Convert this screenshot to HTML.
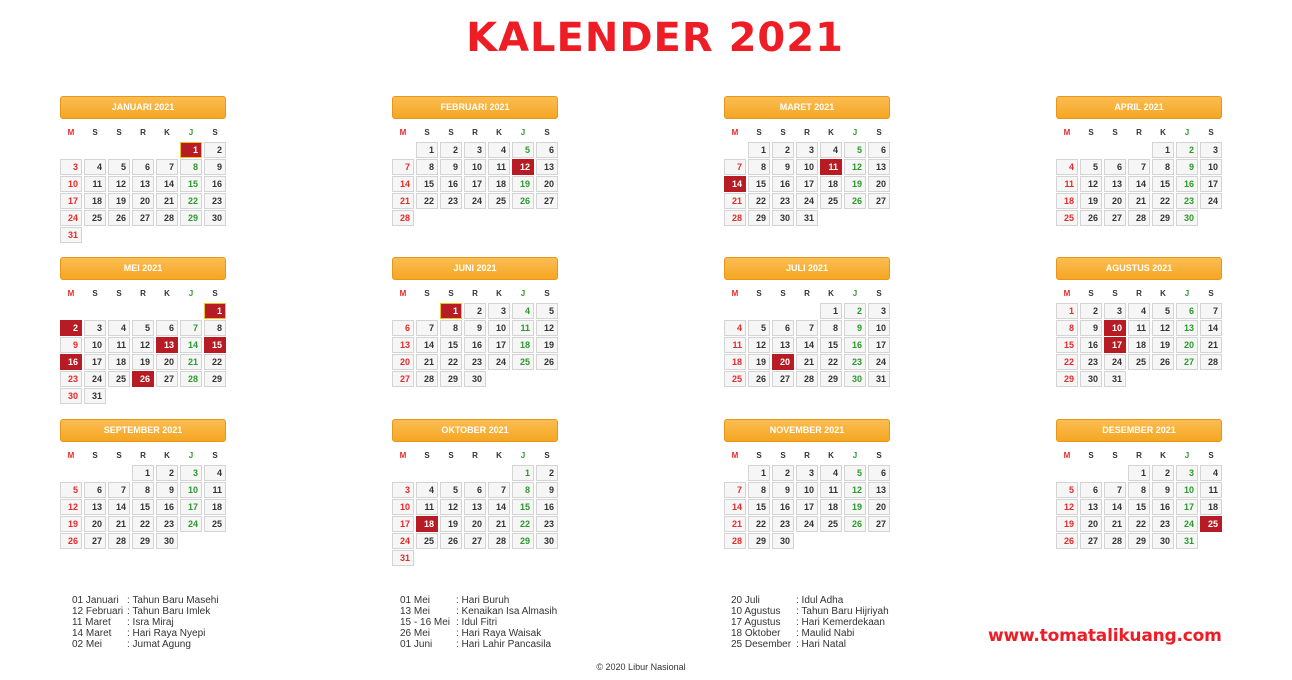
<!DOCTYPE html>
<html><head><meta charset="utf-8"><style>
*{margin:0;padding:0;box-sizing:border-box}
body{width:1292px;height:680px;background:#fff;position:relative;overflow:hidden;font-family:"Liberation Sans",Arial,sans-serif}
.title{position:absolute;left:0;width:1310px;top:14px;text-align:center;font-family:"DejaVu Sans",sans-serif;font-weight:bold;font-size:40px;color:#ee1c25;letter-spacing:1px;line-height:48px}
.m{position:absolute;width:168px}
.hd{height:23px;margin-left:0;width:166px;border:1px solid #e8961a;border-radius:3px;background:linear-gradient(#fbbd52,#f5a623);color:#fff;font-weight:bold;font-size:9px;text-align:center;line-height:21px}
.dn{display:grid;grid-template-columns:repeat(7,22px);column-gap:2px;margin-top:8px;height:12px;font-size:8px;font-weight:bold;color:#333;text-align:center;line-height:12px}
.dn span:first-child{color:#e52a2a}.dn span:nth-child(6){color:#2a9a2a}
.g{display:grid;grid-template-columns:repeat(7,22px);grid-auto-rows:16px;column-gap:2px;row-gap:1px;margin-top:3px}
.g span{border:1px solid #d4d4d4;background:#f6f6f6;font-size:9px;font-weight:bold;color:#333;text-align:right;padding-right:3px;line-height:14px}
.g span:nth-child(7n+1){color:#e52a2a}
.g span:nth-child(7n+6){color:#2a9a2a}
.g span.e{visibility:hidden}
.g span.h{background:#b71c25;color:#fff;border-color:#b71c25}
.g span.o{border-color:#f0c020}
.lg{position:absolute;font-size:10px;line-height:11px;color:#333}
.lg div{white-space:nowrap}
.lg b{font-weight:normal;display:inline-block}
.web{position:absolute;left:988px;top:626px;font-family:"DejaVu Sans",sans-serif;font-weight:bold;font-size:17px;color:#ee1c25;letter-spacing:-0.2px}
.ft{position:absolute;left:0;width:1282px;top:662px;text-align:center;font-size:9px;color:#333}
</style></head><body>
<div class="title">KALENDER 2021</div>

<div class="m" style="left:60px;top:96px"><div class="hd">JANUARI 2021</div><div class="dn"><span>M</span><span>S</span><span>S</span><span>R</span><span>K</span><span>J</span><span>S</span></div><div class="g"><span class="e"></span><span class="e"></span><span class="e"></span><span class="e"></span><span class="e"></span><span class="h o">1</span><span>2</span><span>3</span><span>4</span><span>5</span><span>6</span><span>7</span><span>8</span><span>9</span><span>10</span><span>11</span><span>12</span><span>13</span><span>14</span><span>15</span><span>16</span><span>17</span><span>18</span><span>19</span><span>20</span><span>21</span><span>22</span><span>23</span><span>24</span><span>25</span><span>26</span><span>27</span><span>28</span><span>29</span><span>30</span><span>31</span></div></div>

<div class="m" style="left:392px;top:96px"><div class="hd">FEBRUARI 2021</div><div class="dn"><span>M</span><span>S</span><span>S</span><span>R</span><span>K</span><span>J</span><span>S</span></div><div class="g"><span class="e"></span><span>1</span><span>2</span><span>3</span><span>4</span><span>5</span><span>6</span><span>7</span><span>8</span><span>9</span><span>10</span><span>11</span><span class="h">12</span><span>13</span><span>14</span><span>15</span><span>16</span><span>17</span><span>18</span><span>19</span><span>20</span><span>21</span><span>22</span><span>23</span><span>24</span><span>25</span><span>26</span><span>27</span><span>28</span></div></div>

<div class="m" style="left:724px;top:96px"><div class="hd">MARET 2021</div><div class="dn"><span>M</span><span>S</span><span>S</span><span>R</span><span>K</span><span>J</span><span>S</span></div><div class="g"><span class="e"></span><span>1</span><span>2</span><span>3</span><span>4</span><span>5</span><span>6</span><span>7</span><span>8</span><span>9</span><span>10</span><span class="h">11</span><span>12</span><span>13</span><span class="h">14</span><span>15</span><span>16</span><span>17</span><span>18</span><span>19</span><span>20</span><span>21</span><span>22</span><span>23</span><span>24</span><span>25</span><span>26</span><span>27</span><span>28</span><span>29</span><span>30</span><span>31</span></div></div>

<div class="m" style="left:1056px;top:96px"><div class="hd">APRIL 2021</div><div class="dn"><span>M</span><span>S</span><span>S</span><span>R</span><span>K</span><span>J</span><span>S</span></div><div class="g"><span class="e"></span><span class="e"></span><span class="e"></span><span class="e"></span><span>1</span><span>2</span><span>3</span><span>4</span><span>5</span><span>6</span><span>7</span><span>8</span><span>9</span><span>10</span><span>11</span><span>12</span><span>13</span><span>14</span><span>15</span><span>16</span><span>17</span><span>18</span><span>19</span><span>20</span><span>21</span><span>22</span><span>23</span><span>24</span><span>25</span><span>26</span><span>27</span><span>28</span><span>29</span><span>30</span></div></div>

<div class="m" style="left:60px;top:257px"><div class="hd">MEI 2021</div><div class="dn"><span>M</span><span>S</span><span>S</span><span>R</span><span>K</span><span>J</span><span>S</span></div><div class="g"><span class="e"></span><span class="e"></span><span class="e"></span><span class="e"></span><span class="e"></span><span class="e"></span><span class="h o">1</span><span class="h">2</span><span>3</span><span>4</span><span>5</span><span>6</span><span>7</span><span>8</span><span>9</span><span>10</span><span>11</span><span>12</span><span class="h">13</span><span>14</span><span class="h">15</span><span class="h">16</span><span>17</span><span>18</span><span>19</span><span>20</span><span>21</span><span>22</span><span>23</span><span>24</span><span>25</span><span class="h">26</span><span>27</span><span>28</span><span>29</span><span>30</span><span>31</span></div></div>

<div class="m" style="left:392px;top:257px"><div class="hd">JUNI 2021</div><div class="dn"><span>M</span><span>S</span><span>S</span><span>R</span><span>K</span><span>J</span><span>S</span></div><div class="g"><span class="e"></span><span class="e"></span><span class="h o">1</span><span>2</span><span>3</span><span>4</span><span>5</span><span>6</span><span>7</span><span>8</span><span>9</span><span>10</span><span>11</span><span>12</span><span>13</span><span>14</span><span>15</span><span>16</span><span>17</span><span>18</span><span>19</span><span>20</span><span>21</span><span>22</span><span>23</span><span>24</span><span>25</span><span>26</span><span>27</span><span>28</span><span>29</span><span>30</span></div></div>

<div class="m" style="left:724px;top:257px"><div class="hd">JULI 2021</div><div class="dn"><span>M</span><span>S</span><span>S</span><span>R</span><span>K</span><span>J</span><span>S</span></div><div class="g"><span class="e"></span><span class="e"></span><span class="e"></span><span class="e"></span><span>1</span><span>2</span><span>3</span><span>4</span><span>5</span><span>6</span><span>7</span><span>8</span><span>9</span><span>10</span><span>11</span><span>12</span><span>13</span><span>14</span><span>15</span><span>16</span><span>17</span><span>18</span><span>19</span><span class="h">20</span><span>21</span><span>22</span><span>23</span><span>24</span><span>25</span><span>26</span><span>27</span><span>28</span><span>29</span><span>30</span><span>31</span></div></div>

<div class="m" style="left:1056px;top:257px"><div class="hd">AGUSTUS 2021</div><div class="dn"><span>M</span><span>S</span><span>S</span><span>R</span><span>K</span><span>J</span><span>S</span></div><div class="g"><span>1</span><span>2</span><span>3</span><span>4</span><span>5</span><span>6</span><span>7</span><span>8</span><span>9</span><span class="h">10</span><span>11</span><span>12</span><span>13</span><span>14</span><span>15</span><span>16</span><span class="h">17</span><span>18</span><span>19</span><span>20</span><span>21</span><span>22</span><span>23</span><span>24</span><span>25</span><span>26</span><span>27</span><span>28</span><span>29</span><span>30</span><span>31</span></div></div>

<div class="m" style="left:60px;top:419px"><div class="hd">SEPTEMBER 2021</div><div class="dn"><span>M</span><span>S</span><span>S</span><span>R</span><span>K</span><span>J</span><span>S</span></div><div class="g"><span class="e"></span><span class="e"></span><span class="e"></span><span>1</span><span>2</span><span>3</span><span>4</span><span>5</span><span>6</span><span>7</span><span>8</span><span>9</span><span>10</span><span>11</span><span>12</span><span>13</span><span>14</span><span>15</span><span>16</span><span>17</span><span>18</span><span>19</span><span>20</span><span>21</span><span>22</span><span>23</span><span>24</span><span>25</span><span>26</span><span>27</span><span>28</span><span>29</span><span>30</span></div></div>

<div class="m" style="left:392px;top:419px"><div class="hd">OKTOBER 2021</div><div class="dn"><span>M</span><span>S</span><span>S</span><span>R</span><span>K</span><span>J</span><span>S</span></div><div class="g"><span class="e"></span><span class="e"></span><span class="e"></span><span class="e"></span><span class="e"></span><span>1</span><span>2</span><span>3</span><span>4</span><span>5</span><span>6</span><span>7</span><span>8</span><span>9</span><span>10</span><span>11</span><span>12</span><span>13</span><span>14</span><span>15</span><span>16</span><span>17</span><span class="h">18</span><span>19</span><span>20</span><span>21</span><span>22</span><span>23</span><span>24</span><span>25</span><span>26</span><span>27</span><span>28</span><span>29</span><span>30</span><span>31</span></div></div>

<div class="m" style="left:724px;top:419px"><div class="hd">NOVEMBER 2021</div><div class="dn"><span>M</span><span>S</span><span>S</span><span>R</span><span>K</span><span>J</span><span>S</span></div><div class="g"><span class="e"></span><span>1</span><span>2</span><span>3</span><span>4</span><span>5</span><span>6</span><span>7</span><span>8</span><span>9</span><span>10</span><span>11</span><span>12</span><span>13</span><span>14</span><span>15</span><span>16</span><span>17</span><span>18</span><span>19</span><span>20</span><span>21</span><span>22</span><span>23</span><span>24</span><span>25</span><span>26</span><span>27</span><span>28</span><span>29</span><span>30</span></div></div>

<div class="m" style="left:1056px;top:419px"><div class="hd">DESEMBER 2021</div><div class="dn"><span>M</span><span>S</span><span>S</span><span>R</span><span>K</span><span>J</span><span>S</span></div><div class="g"><span class="e"></span><span class="e"></span><span class="e"></span><span>1</span><span>2</span><span>3</span><span>4</span><span>5</span><span>6</span><span>7</span><span>8</span><span>9</span><span>10</span><span>11</span><span>12</span><span>13</span><span>14</span><span>15</span><span>16</span><span>17</span><span>18</span><span>19</span><span>20</span><span>21</span><span>22</span><span>23</span><span>24</span><span class="h">25</span><span>26</span><span>27</span><span>28</span><span>29</span><span>30</span><span>31</span></div></div>

<div class="lg" style="left:72px;top:595px">
<div><b style="width:55px">01 Januari</b>: Tahun Baru Masehi</div>
<div><b style="width:55px">12 Februari</b>: Tahun Baru Imlek</div>
<div><b style="width:55px">11 Maret</b>: Isra Miraj</div>
<div><b style="width:55px">14 Maret</b>: Hari Raya Nyepi</div>
<div><b style="width:55px">02 Mei</b>: Jumat Agung</div>
</div>
<div class="lg" style="left:400px;top:595px">
<div><b style="width:56px">01 Mei</b>: Hari Buruh</div>
<div><b style="width:56px">13 Mei</b>: Kenaikan Isa Almasih</div>
<div><b style="width:56px">15 - 16 Mei</b>: Idul Fitri</div>
<div><b style="width:56px">26 Mei</b>: Hari Raya Waisak</div>
<div><b style="width:56px">01 Juni</b>: Hari Lahir Pancasila</div>
</div>
<div class="lg" style="left:731px;top:595px">
<div><b style="width:65px">20 Juli</b>: Idul Adha</div>
<div><b style="width:65px">10 Agustus</b>: Tahun Baru Hijriyah</div>
<div><b style="width:65px">17 Agustus</b>: Hari Kemerdekaan</div>
<div><b style="width:65px">18 Oktober</b>: Maulid Nabi</div>
<div><b style="width:65px">25 Desember</b>: Hari Natal</div>
</div>
<div class="web">www.tomatalikuang.com</div>
<div class="ft">© 2020 Libur Nasional</div>
</body></html>
